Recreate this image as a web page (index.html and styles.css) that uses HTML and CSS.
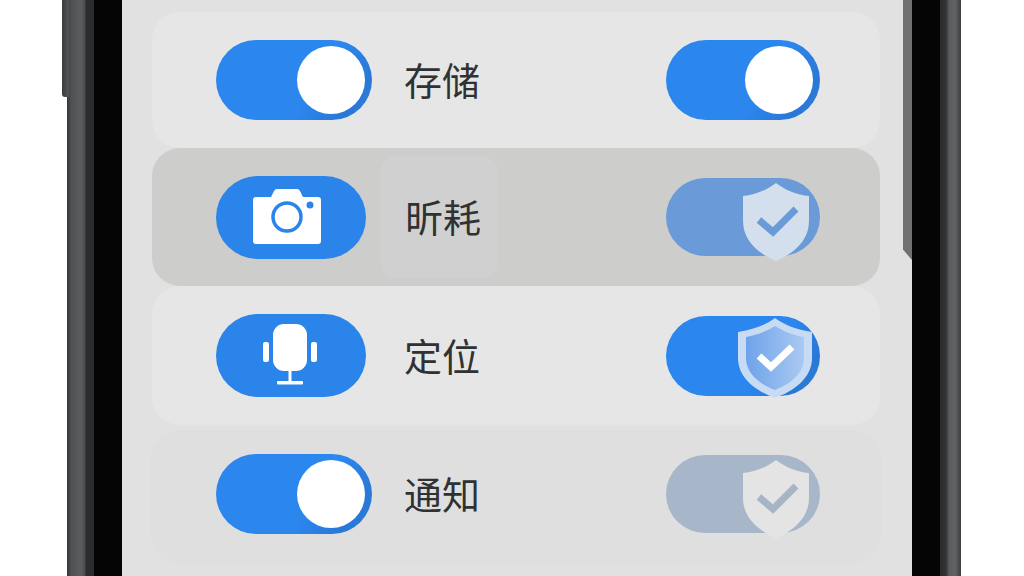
FILE: index.html
```html
<!DOCTYPE html>
<html lang="zh-CN">
<head>
    <meta charset="UTF-8">
    <meta name="viewport" content="width=device-width, initial-scale=1.0">
    <title>权限设置</title>
    <link rel="stylesheet" href="styles.css">
</head>
<body>
    <div class="device">
        <span class="side-key"></span>
        <div class="bezel">
            <main class="screen">
                <span class="screen-edge"></span>

                <section class="row row-light row-first">
                    <div class="toggle toggle-left"><span class="knob"></span></div>
                    <div class="label">存储</div>
                    <div class="toggle toggle-right"><span class="knob"></span></div>
                </section>

                <section class="row row-pressed">
                    <div class="pill">
                        <svg class="icon-camera" width="68" height="56" viewBox="0 0 68 56">
                            <path fill="#fff" d="M3 9H18L21 3Q22 1 24 1H44Q46 1 47 3L50 9H65Q68 9 68 12V53Q68 56 65 56H3Q0 56 0 53V12Q0 9 3 9Z"/>
                            <circle cx="34" cy="29" r="14" fill="#fff" stroke="#2b84ea" stroke-width="3.5"/>
                            <circle cx="57" cy="17" r="3.5" fill="#2b84ea"/>
                        </svg>
                    </div>
                    <div class="label label-boxed">昕耗</div>
                    <div class="toggle toggle-right toggle-faded">
                        <svg class="shield" width="66" height="78" viewBox="0 0 66 78">
                            <path fill="#d3dfec" d="M33 0C42 7 54 12 66 13V38C66 58 50 71 33 78C16 71 0 58 0 38V13C12 12 24 7 33 0Z"/>
                            <path fill="none" stroke="#6a9bd8" stroke-width="7" d="M16 37L30 49L53 26"/>
                        </svg>
                    </div>
                </section>

                <section class="row row-light">
                    <div class="pill">
                        <svg class="icon-mic" width="54" height="62" viewBox="0 0 54 62">
                            <rect x="10" y="0" width="34" height="47" rx="11" fill="#fff"/>
                            <rect x="0" y="18" width="6" height="20" rx="2" fill="#fff"/>
                            <rect x="48" y="18" width="6" height="20" rx="2" fill="#fff"/>
                            <rect x="25.5" y="46" width="3" height="12" fill="#fff"/>
                            <rect x="14" y="57" width="26" height="3.5" rx="1" fill="#fff"/>
                        </svg>
                    </div>
                    <div class="label">定位</div>
                    <div class="toggle toggle-right">
                        <svg class="shield shield-bright" width="74" height="80" viewBox="0 0 74 80">
                            <defs>
                                <linearGradient id="shieldFill" x1="0" y1="0" x2="1" y2="0">
                                    <stop offset="0" stop-color="#6ea3ea"/>
                                    <stop offset="1" stop-color="#abc9f1"/>
                                </linearGradient>
                            </defs>
                            <path fill="#c8dbf4" d="M37 0C46 7 60 12 74 14V40C74 60 56 73 37 80C18 73 0 60 0 40V14C14 12 28 7 37 0Z"/>
                            <path fill="url(#shieldFill)" d="M37 8C45 13 55 17 66 19V40C66 56 52 66 37 72C22 66 8 56 8 40V19C19 17 29 13 37 8Z"/>
                            <path fill="none" stroke="#fff" stroke-width="7" d="M21 38L33 49L54 29"/>
                        </svg>
                    </div>
                </section>

                <section class="row row-dim">
                    <div class="toggle toggle-left"><span class="knob"></span></div>
                    <div class="label">通知</div>
                    <div class="toggle toggle-right toggle-muted">
                        <svg class="shield" width="66" height="78" viewBox="0 0 66 78">
                            <path fill="#e4e4e4" d="M33 0C42 7 54 12 66 13V38C66 58 50 71 33 78C16 71 0 58 0 38V13C12 12 24 7 33 0Z"/>
                            <path fill="none" stroke="#a7b4c5" stroke-width="7" d="M16 37L30 49L53 26"/>
                        </svg>
                    </div>
                </section>
            </main>
        </div>
    </div>
</body>
</html>
```

FILE: styles.css
```css
:root {
    --blue: #2b84ea;
    --ink: #303133;
}

html, body {
    margin: 0;
    height: 100%;
    overflow: hidden;
    background: #fff;
}

.device {
    position: relative;
    box-sizing: border-box;
    width: 894px;
    height: 576px;
    margin-left: 67px;
    padding: 0 21px 0 27px;
    background: linear-gradient(90deg, #343536 0, #4f5051 4px, #5c5d5e 14px, #4a4b4c 18px, #2b2c2d 19px, #2b2c2d 27px, #2b2c2d 873px, #323334 879px, #5a5b5c 882px, #626364 888px, #3d3e3f 894px);
}

/* left side key, sticks out of the frame */
.side-key {
    position: absolute;
    left: -5px;
    top: 0;
    width: 7px;
    height: 97px;
    background: linear-gradient(90deg, #3a3b3c, #555657);
    border-radius: 0 0 0 3px;
}

.bezel {
    height: 100%;
    padding: 0 28px;
    background: #050506;
}

.screen {
    position: relative;
    height: 100%;
    box-sizing: border-box;
    padding: 12px 32px 0 30px;
    background: #e1e1e1;
    overflow: hidden;
}

/* gray strip on the right of the screen */
.screen-edge {
    position: absolute;
    right: 0;
    top: 0;
    width: 9px;
    height: 260px;
    background: #6f7172;
    clip-path: polygon(0 0, 100% 0, 100% 100%, 0 96%);
}

.row {
    display: grid;
    grid-template-columns: 189px 1fr auto;
    align-items: center;
    box-sizing: border-box;
    padding: 0 60px 0 64px;
    height: 138px;
    border-radius: 28px;
}

.row-light {
    background: #e6e6e6;
    height: 139px;
}

.row-first.row-light {
    height: 136px;
}

.row-pressed {
    background: #cdcdcc;
}

.row-dim {
    height: 130px;
    margin-top: 7px;
    padding-bottom: 6px;
    background: #dfdfdf;
    box-shadow: 0 0 3px #dbdbdb;
}

.label {
    margin-left: -1px;
    padding-bottom: 2px;
    font-family: "Noto Sans CJK SC", "Noto Sans", sans-serif;
    font-size: 38px;
    line-height: 1;
    color: var(--ink);
}

.label-boxed {
    justify-self: start;
    display: flex;
    align-items: center;
    box-sizing: border-box;
    height: 122px;
    margin-left: -25px;
    padding: 0 17px 2px 25px;
    border-radius: 16px;
    background: #d0d0d0;
}

.pill {
    display: flex;
    align-items: center;
    justify-content: center;
    width: 150px;
    height: 83px;
    border-radius: 42px;
    background: var(--blue);
}

.icon-camera {
    margin: 0 8px 3px 0;
}

.icon-mic {
    margin: 0 3px 2px 0;
}

.toggle {
    position: relative;
    height: 80px;
    border-radius: 40px;
    background: linear-gradient(125deg, #2b86ee 62%, #2a78d6 85%, #2d7fdc);
}

.toggle-left {
    width: 156px;
}

.toggle-right {
    width: 154px;
}

.toggle-faded {
    height: 78px;
    border-radius: 39px;
    background: #6a9bd8;
}

.toggle-muted {
    height: 78px;
    border-radius: 39px;
    background: #a7b6c9;
}

.knob {
    position: absolute;
    right: 7px;
    top: 6px;
    width: 68px;
    height: 68px;
    border-radius: 50%;
    background: #fff;
}

.shield {
    position: absolute;
    left: 77px;
    top: 5px;
}

.shield-bright {
    left: 72px;
    top: 2px;
}
```
